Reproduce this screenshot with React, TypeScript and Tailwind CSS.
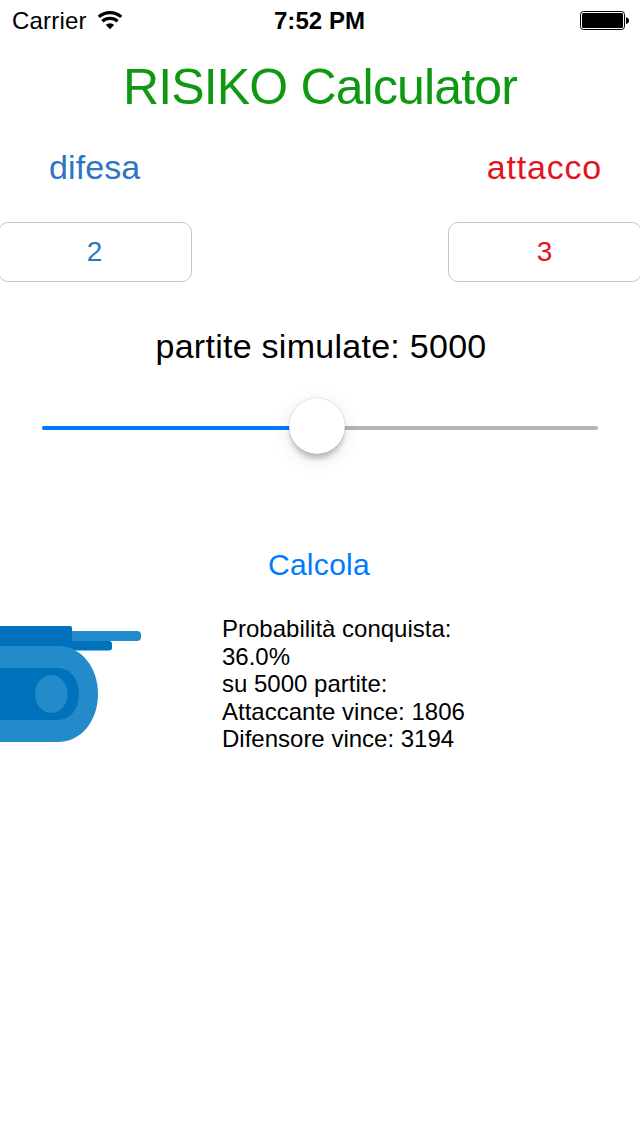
import { useState } from "react";

interface FieldProps {
  value: string;
  label: string;
  className: string;
  onChange: (value: string) => void;
}

const WifiIcon = () => (
  <svg width="26" height="20" viewBox="0 0 26 20" fill="none" stroke="black">
    <path d="M1.8 5.9a17 17 0 0 1 22.4 0" strokeWidth="3.2" />
    <path d="M5.4 10.3a11.4 11.4 0 0 1 15.2 0" strokeWidth="3.2" />
    <path d="M8.8 13.8a6.4 6.4 0 0 1 8.4 0L13 18.2z" fill="black" stroke="none" />
  </svg>
);

const BatteryIcon = () => (
  <svg width="50" height="20" viewBox="0 0 50 20">
    <rect x="0.5" y="0.5" width="44" height="18" rx="3" fill="none" stroke="black" />
    <rect x="2" y="2" width="41" height="15" rx="1.5" fill="black" />
    <path d="M46 6.3c2 .3 3 1.6 3 3.3s-1 3-3 3.3z" fill="black" />
  </svg>
);

const StatusBar = () => (
  <header className="grid h-[42px] grid-cols-3 items-center pl-3 pr-[10px] text-2xl leading-[42px]">
    <div className="flex items-center gap-[10px]">
      <span className="tracking-[0.2px]">Carrier</span>
      <WifiIcon />
    </div>
    <span className="pr-[3px] text-center font-bold tracking-[0.05px]">
      7:52 PM
    </span>
    <div className="flex justify-end">
      <BatteryIcon />
    </div>
  </header>
);

const Field = ({ value, label, className, onChange }: FieldProps) => (
  <input
    value={value}
    aria-label={label}
    onChange={(e) => onChange(e.target.value)}
    className={`h-[60px] w-[194px] rounded-[10px] border border-[#c8c8c8] bg-white pr-px text-center text-[28px] outline-none ${className}`}
  />
);

const Slider = ({ percent }: { percent: number }) => (
  <div className="relative mx-[42px] mt-[60px] h-1 rounded-full bg-[#b6b6b6]">
    <div
      className="h-1 rounded-full bg-[#007aff]"
      style={{ width: `${percent}%` }}
    />
    <div
      className="absolute -top-[28px] size-14 -translate-x-1/2 rounded-full bg-white shadow-[0_0_1px_rgba(0,0,0,0.35),0_6px_5px_-1px_rgba(0,0,0,0.2),0_5px_20px_rgba(0,0,0,0.1)]"
      style={{ left: `${percent}%` }}
    />
  </div>
);

const Tank = () => (
  <svg width="142" height="118" viewBox="0 0 142 118" className="mt-[11px]">
    <rect x="60" y="5" width="81" height="10" rx="4" fill="#248bcb" />
    <rect x="40" y="15" width="72" height="9.5" rx="3" fill="#0072bc" />
    <path d="M60 10h12v10H60z" fill="#0072bc" />
    <path d="M0 0h70a2 2 0 0 1 2 2v18H0z" fill="#0072bc" />
    <path d="M0 20h58c23 0 40 21 40 48s-17 48-40 48H0z" fill="#248bcb" />
    <path d="M0 42h58c12 0 21 11 21 26s-9 26-21 26H0z" fill="#0072bc" />
    <ellipse cx="51.3" cy="68" rx="16.3" ry="19" fill="#248bcb" />
  </svg>
);

export default function App() {
  const [defence, setDefence] = useState("2");
  const [attack, setAttack] = useState("3");

  return (
    <div className="flex h-[1136px] w-[640px] flex-col overflow-hidden bg-white font-['Liberation_Sans',Arial,sans-serif] text-black">
      <StatusBar />
      <h1 className="mt-[15px] text-center text-[50px] leading-[60px] tracking-[-0.85px] text-[#0f9912]">
        RISIKO Calculator
      </h1>
      <div className="mt-[30px] flex justify-between pl-[49px] pr-[38px] text-[34px] leading-10">
        <span className="tracking-[0.1px] text-[#2d76c2]">difesa</span>
        <span className="tracking-[0.8px] text-[#e3141e]">attacco</span>
      </div>
      <div className="-mx-[2px] mt-[35px] flex justify-between">
        <Field
          value={defence}
          label="difesa"
          className="text-[#2d76c2]"
          onChange={setDefence}
        />
        <Field
          value={attack}
          label="attacco"
          className="text-[#e3141e]"
          onChange={setAttack}
        />
      </div>
      <p className="mt-[44px] pl-[2px] text-center text-[34px] leading-10 tracking-[0.27px]">
        partite simulate: 5000
      </p>
      <Slider percent={49.5} />
      <button className="mt-[115px] self-center pr-[2px] text-3xl leading-10 tracking-[0.3px] text-[#007aff]">
        Calcola
      </button>
      <div className="mt-[30px] flex gap-20">
        <Tank />
        <div className="text-2xl leading-[27.5px]">
          <p>Probabilità conquista:</p>
          <p>36.0%</p>
          <p>su 5000 partite:</p>
          <p>Attaccante vince: 1806</p>
          <p>Difensore vince: 3194</p>
        </div>
      </div>
    </div>
  );
}
